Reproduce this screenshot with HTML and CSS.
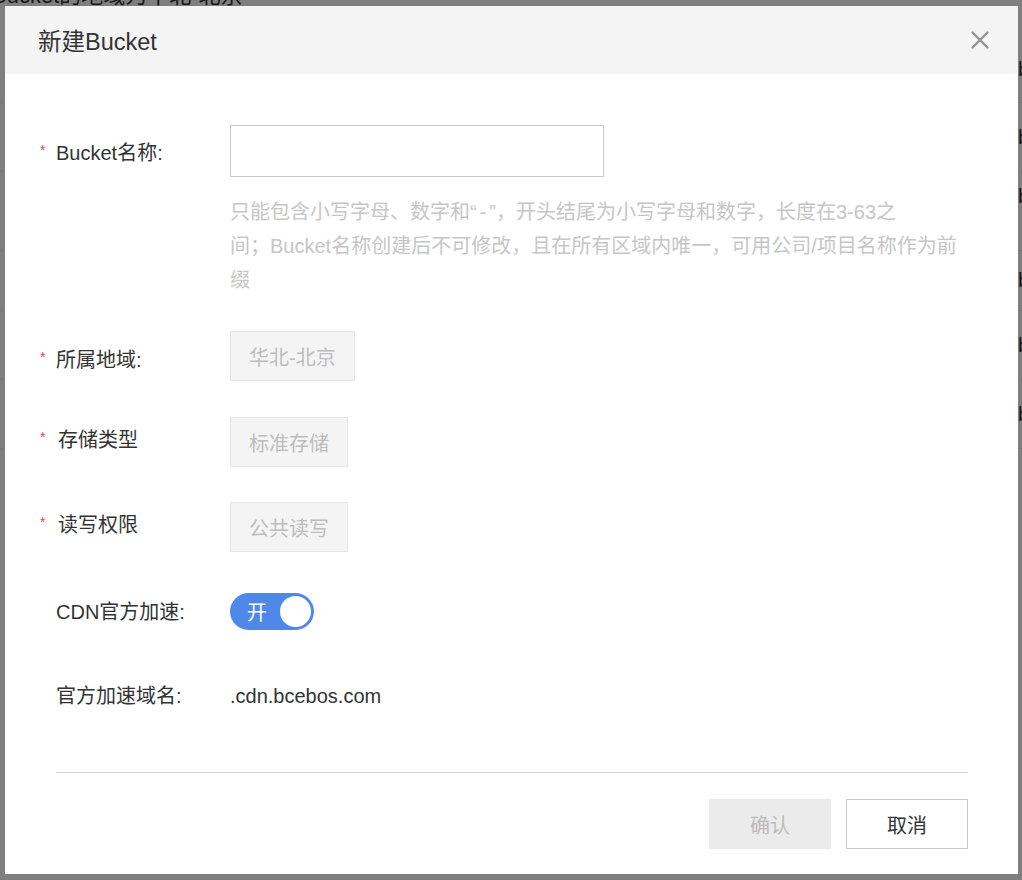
FILE: index.html
```html
<!DOCTYPE html>
<html lang="zh-CN">
<head>
<meta charset="utf-8">
<title>新建Bucket</title>
<link rel="stylesheet" href="styles.css">
</head>
<body>
<div class="page">
  <div class="page-notice">Bucket的地域为华北-北京</div>
  <div class="page-row row-a"><span class="page-cell">bucket</span></div>
  <div class="page-row row-b"><span class="page-cell">bucket</span></div>
  <div class="page-row row-c"><span class="page-cell">bucket</span></div>
  <div class="page-row row-d"><span class="page-cell">bucket</span></div>
  <div class="page-row row-e"><span class="page-cell">bucket</span></div>
  <div class="page-row row-e"><span class="page-cell">bucket</span></div>
</div>
<div class="mask"></div>

<div class="modal">
  <div class="modal-head">
    <div class="modal-title">新建Bucket</div>
    <svg class="modal-close" width="18" height="18" viewBox="0 0 18 18" aria-label="关闭">
      <path d="M1.5 1.5 L16.5 16.5 M16.5 1.5 L1.5 16.5" stroke="#939393" stroke-width="2.4" fill="none" stroke-linecap="round"/>
    </svg>
  </div>

  <div class="form">
    <div class="row">
      <div class="label"><span class="req">*</span>Bucket名称:</div>
      <div class="field">
        <div class="input"></div>
        <p class="help">只能包含小写字母、数字和<span class="quote">“-</span>”，开头结尾为小写字母和数字，长度在3-63之<br>间；Bucket名称创建后不可修改，且在所有区域内唯一，可用公司/项目名称作为前缀</p>
      </div>
    </div>

    <div class="row row-region">
      <div class="label label-mid"><span class="req">*</span>所属地域:</div>
      <div class="field"><span class="static">华北-北京</span></div>
    </div>

    <div class="row row-storage">
      <div class="label label-high"><span class="req req-wide">*</span>存储类型</div>
      <div class="field"><span class="static">标准存储</span></div>
    </div>

    <div class="row row-acl">
      <div class="label label-high"><span class="req req-wide">*</span>读写权限</div>
      <div class="field"><span class="static">公共读写</span></div>
    </div>

    <div class="row row-cdn">
      <div class="label label-low"><span class="req req-empty"></span>CDN官方加速:</div>
      <div class="field">
        <span class="switch"><span class="switch-text">开</span><span class="switch-knob"></span></span>
      </div>
    </div>

    <div class="row row-domain">
      <div class="label label-flat"><span class="req req-empty"></span>官方加速域名:</div>
      <div class="field"><span class="domain">.cdn.bcebos.com</span></div>
    </div>
  </div>

  <div class="modal-foot">
    <div class="foot-buttons">
      <button class="btn btn-disabled" type="button">确认</button>
      <button class="btn btn-cancel" type="button">取消</button>
    </div>
  </div>
</div>
</body>
</html>
```

FILE: styles.css
```css
html, body {
  margin: 0;
  padding: 0;
}

body {
  width: 1022px;
  height: 880px;
  overflow: hidden;
  position: relative;
  font-family: "Liberation Sans", "Noto Sans CJK SC", sans-serif;
  color: #333;
}

/* ---------- background page ---------- */
.page {
  background: #fff;
  height: 880px;
  overflow: hidden;
}

.page-notice {
  font-size: 22px;
  line-height: 20px;
  color: #333;
  margin-top: -14px;
  margin-left: -8px;
  white-space: nowrap;
}

.page-row {
  border-bottom: 1px solid #eee;
  box-sizing: border-box;
  display: flex;
  align-items: center;
  font-size: 20px;
  color: #333;
}

.page-cell {
  padding-left: 1018px;
  white-space: nowrap;
}

.row-a { height: 97px; padding-top: 30px; }
.row-b { height: 69px; }
.row-c { height: 79px; padding-bottom: 30px; }
.row-d { height: 60px; }
.row-e { height: 69px; }

.mask {
  position: absolute;
  inset: 0;
  background: rgba(0, 0, 0, 0.5);
}

/* ---------- modal ---------- */
.modal {
  position: absolute;
  left: 5px;
  top: 6px;
  width: 1013px;
  height: 868px;
  background: #fff;
  display: flex;
  flex-direction: column;
}

.modal-head {
  height: 68px;
  flex: none;
  background: #f4f4f4;
  display: flex;
  align-items: center;
  justify-content: space-between;
  padding: 0 29px 0 33px;
}

.modal-title {
  font-size: 23.5px;
  color: #333;
}

.modal-close {
  display: block;
}

.form {
  padding: 51px 50px 0 33px;
  display: flex;
  flex-direction: column;
}

.row {
  display: flex;
  align-items: flex-start;
}

.row-region { margin-top: 34px; }
.row-storage { margin-top: 36px; }
.row-acl { margin-top: 35px; }
.row-cdn { margin-top: 41px; }
.row-domain { margin-top: 52px; }

.label {
  width: 192px;
  flex: none;
  font-size: 20px;
  line-height: 28px;
  color: #333;
  padding-top: 11px;
  white-space: nowrap;
}

.label-mid { padding-top: 12px; }
.label-high { padding-top: 6px; }
.label-low { padding-top: 5px; }
.label-flat { padding-top: 0; }

.req {
  display: inline-block;
  width: 18px;
  color: #e0474f;
  font-size: 14px;
  vertical-align: 5px;
  padding-left: 2px;
  box-sizing: border-box;
}

.req-wide { width: 20px; }

.field {
  flex: 1;
  min-width: 0;
}

.input {
  width: 374px;
  height: 52px;
  border: 1px solid #c9c9c9;
  box-sizing: border-box;
  background: #fff;
}

.help {
  margin: 18px 0 0;
  font-size: 20px;
  line-height: 34px;
  color: #c6c6c6;
  width: 745px;
}

.quote {
  letter-spacing: 3px;
}

.static {
  display: inline-flex;
  align-items: center;
  height: 50px;
  box-sizing: border-box;
  padding: 0 18px;
  border: 1px solid #e6e6e6;
  background: #f4f4f4;
  color: #bdbdbd;
  font-size: 20px;
}

.switch {
  display: inline-flex;
  align-items: center;
  justify-content: space-between;
  width: 84px;
  height: 37px;
  box-sizing: border-box;
  padding: 0 3px 0 17px;
  border-radius: 19px;
  background: #4f89e8;
  color: #fff;
  font-size: 20px;
}

.switch-knob {
  width: 31px;
  height: 31px;
  border-radius: 50%;
  background: #fff;
}

.domain {
  font-size: 20px;
  line-height: 28px;
  color: #333;
}

/* ---------- footer ---------- */
.modal-foot {
  margin-top: auto;
  padding: 0 50px 25px 51px;
}

.foot-buttons {
  border-top: 1px solid #d4d4d4;
  padding-top: 26px;
  display: flex;
  justify-content: flex-end;
  gap: 15px;
}

.btn {
  width: 122px;
  height: 50px;
  box-sizing: border-box;
  font-family: "Liberation Sans", "Noto Sans CJK SC", sans-serif;
  font-size: 20px;
  padding: 0;
  margin: 0;
  cursor: pointer;
}

.btn-disabled {
  background: #ebebeb;
  border: 1px solid #ebebeb;
  color: #bbb;
}

.btn-cancel {
  background: #fff;
  border: 1px solid #c9c9c9;
  color: #333;
}
```
